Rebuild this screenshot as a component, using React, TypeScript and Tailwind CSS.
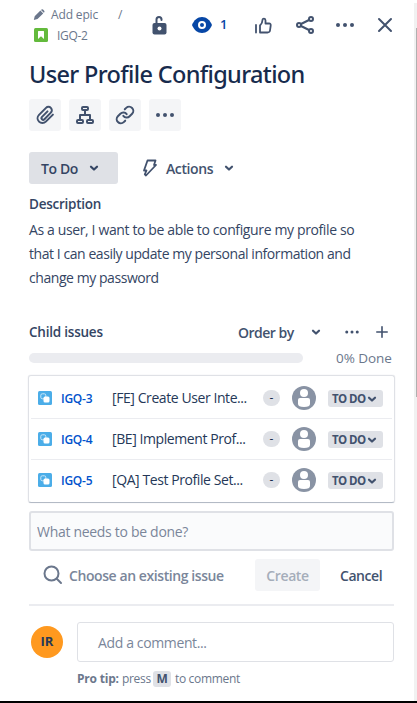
import React from "react";

const stroke = {
  fill: "none",
  stroke: "currentColor",
  strokeWidth: 2,
  strokeLinecap: "round" as const,
  strokeLinejoin: "round" as const,
};

function Chevron({ className = "" }: { className?: string }) {
  return (
    <svg viewBox="0 0 10 8" className={`h-2 w-2.5 shrink-0 ${className}`} {...stroke} strokeWidth={2.2}>
      <path d="M2 2.7 5 5.5 8 2.7" />
    </svg>
  );
}

function Dots({ className = "" }: { className?: string }) {
  return (
    <svg viewBox="0 0 24 24" className={`shrink-0 ${className}`} fill="currentColor">
      <circle cx="5" cy="12" r="2" />
      <circle cx="12" cy="12" r="2" />
      <circle cx="19" cy="12" r="2" />
    </svg>
  );
}

function Header() {
  return (
    <header className="flex h-[50px] pl-1">
      <div className="w-[115px] shrink-0 pt-[5px] text-[12px] text-[#6b778c]">
        <div className="flex h-5 items-center">
          <svg viewBox="0 0 12 12" className="h-3 w-3 shrink-0" fill="currentColor">
            <path d="M1.7 7.3 7.4 1.6 10.2 4.4 4.5 10.1 0.8 11.1ZM8 1 8.6.5Q9.3 0 10 .6L11.2 1.8Q11.8 2.5 11.3 3.2L10.8 3.8Z" />
          </svg>
          <span className="ml-1.5 w-[67px] whitespace-nowrap tracking-[-0.15px]">Add epic</span>
          <span>/</span>
        </div>
        <div className="flex h-5 items-center">
          <svg viewBox="0 0 14 14" className="ml-px h-3.5 w-3.5 shrink-0">
            <rect width="14" height="14" rx="1.5" fill="#63ba3c" />
            <path d="M4 3.5Q4 3 4.5 3H9.500Q10 3 10 3.500V11L7 8.300 4 11Z" fill="#fff" />
          </svg>
          <span className="ml-[9px] mt-px tracking-[-0.3px]">IGQ-2</span>
        </div>
      </div>
      <div className="flex h-[50px] shrink-0 items-center text-[#42526e]">
        <svg viewBox="0 0 24 24" className="-ml-px mr-px h-6 w-6 shrink-0">
          <rect x="5.500" y="10" width="14" height="11.500" rx="2" fill="currentColor" />
          <path d="M9.500 10V6.500Q9.500 4 12 4T14.500 6.500V7" {...stroke} />
          <circle cx="12.500" cy="15.500" r="2" fill="#fff" />
        </svg>
        <svg viewBox="0 0 20 16" className="ml-5 h-4 w-5 shrink-0">
          <path d="M0 8C2 3 5.500 0 10 0S18 3 20 8C18 13 14.500 16 10 16S2 13 0 8Z" fill="#0747a6" />
          <circle cx="10" cy="8" r="3" fill="none" stroke="#fff" strokeWidth="2" />
        </svg>
        <span className="ml-2 w-[24px] text-[13px] font-semibold text-[#0747a6]">1</span>
        <svg viewBox="0 0 24 24" className="ml-[7px] h-6 w-6 shrink-0" {...stroke} strokeWidth={1.8}>
          <path d="M5 12V19.500M9 19.500V12.500C11 10.500 11.500 8.500 11.500 7C11.500 5 14.500 5 14.500 7.500V10.500H18Q20 10.500 19.700 12.500L19 17.500Q18.700 19.500 16.500 19.500H9" />
        </svg>
        <svg viewBox="0 0 24 24" className="ml-[18px] h-6 w-6 shrink-0" {...stroke}>
          <path d="M8 11 16 7M8 13 16 17" />
          <circle cx="6" cy="12" r="2" />
          <circle cx="18" cy="6" r="2" />
          <circle cx="18" cy="18" r="2" />
        </svg>
        <Dots className="ml-4 h-6 w-6" />
        <svg viewBox="0 0 24 24" className="ml-4 h-6 w-6 shrink-0" {...stroke}>
          <path d="M6 6 18 18M18 6 6 18" />
        </svg>
      </div>
    </header>
  );
}

function ToolButton({ children }: { children: React.ReactNode }) {
  return (
    <button className="flex h-8 w-8 items-center justify-center rounded-[3px] bg-[#f4f5f7] text-[#42526e]">
      {children}
    </button>
  );
}

function Toolbar() {
  return (
    <div className="flex gap-2">
      <ToolButton>
        <svg viewBox="0 0 24 24" className="mr-px h-5 w-5" {...stroke} strokeWidth={2.4}>
          <path d="M21.500 11.500 13 20a5.600 5.600 0 0 1-8.200-8.200l8.400-8.400A4 4 0 0 1 19 9.200l-7.700 7.900a2 2 0 0 1-2.900-2.900l6.600-6.600" />
        </svg>
      </ToolButton>
      <ToolButton>
        <svg viewBox="0 0 24 24" className="h-6 w-6" {...stroke}>
          <rect x="9" y="4" width="6" height="3" rx="1" />
          <rect x="4" y="17" width="6" height="3" rx="1" />
          <rect x="14" y="17" width="6" height="3" rx="1" />
          <path d="M12 7V12M7 17V12H17V17" />
        </svg>
      </ToolButton>
      <ToolButton>
        <svg viewBox="0 0 24 24" className="h-5 w-5" {...stroke} strokeWidth={2.4}>
          <path d="M10 13a5 5 0 0 0 7.540.540l3-3a5 5 0 0 0-7.070-7.070l-1.720 1.710" />
          <path d="M14 11a5 5 0 0 0-7.540-.540l-3 3a5 5 0 0 0 7.070 7.070l1.710-1.710" />
        </svg>
      </ToolButton>
      <ToolButton>
        <Dots className="h-6 w-6" />
      </ToolButton>
    </div>
  );
}

const issues = [
  { id: "IGQ-3", title: "[FE] Create User Inte..." },
  { id: "IGQ-4", title: "[BE] Implement Prof..." },
  { id: "IGQ-5", title: "[QA] Test Profile Set..." },
];

function IssueRow({ id, title }: { id: string; title: string }) {
  return (
    <li className="mx-0.5 flex h-[41px] items-center border-b border-[#ebecf0] pl-[7px] last:border-b-transparent">
      <svg viewBox="0 0 14 14" className="h-3.5 w-3.5 shrink-0">
        <rect width="14" height="14" rx="1.500" fill="#4bade8" />
        <rect x="2.800" y="2.800" width="5" height="5" rx="1.500" fill="none" stroke="#c9e6f8" />
        <rect x="5.500" y="5.500" width="6" height="6" rx="1.500" fill="#fff" />
      </svg>
      <span className="ml-[9px] mt-px w-[51px] text-[12px] font-semibold tracking-[-0.25px] text-[#0052cc]">{id}</span>
      <span className="-mt-0.5 w-[151px] whitespace-nowrap text-[14px] tracking-[-0.42px] text-[#253858]">{title}</span>
      <span className="flex h-4 w-[17px] items-center justify-center rounded-full bg-[#dfe1e6] text-[12px] text-[#172b4d]">-</span>
      <svg viewBox="0 0 24 24" className="ml-3 h-6 w-6 shrink-0">
        <circle cx="12" cy="12" r="12" fill="#8993a4" />
        <circle cx="12" cy="7" r="4" fill="#fff" />
        <path d="M6 14Q6 12 8 12H16Q18 12 18 14V18Q18 21 12 21T6 18Z" fill="#fff" />
      </svg>
      <span className="ml-3 mt-px flex h-[17px] w-[55px] items-center rounded-[3px] bg-[#dfe1e6] pl-1 text-[11.5px] font-bold text-[#42526e]">
        <span className="whitespace-nowrap tracking-[-0.6px]">TO DO</span>
        <Chevron className="ml-0.5" />
      </span>
    </li>
  );
}

function ChildIssues() {
  return (
    <section>
      <div className="flex h-6 items-center text-[14px] font-semibold text-[#42526e]">
        <h3 className="w-[209px] text-[13.5px] tracking-[-0.22px] text-[#344563]">Child issues</h3>
        <span className="w-[73px] whitespace-nowrap tracking-[-0.5px]">Order by</span>
        <Chevron />
        <Dots className="ml-[22px] h-[18px] w-[18px]" />
        <svg viewBox="0 0 12 12" className="ml-[15px] h-3 w-3" {...stroke} strokeWidth={1.6}>
          <path d="M6 .8V11.200M.8 6H11.200" />
        </svg>
      </div>
      <div className="mt-1 flex h-[20px] items-center">
        <div className="h-2.5 w-[274px] rounded-full bg-[#ebecf0]" />
        <span className="ml-[33px] whitespace-nowrap text-[13.5px] tracking-[-0.07px] text-[#6b778c]">0% Done</span>
      </div>
      <ul className="-ml-px mt-[7px] h-[128px] w-[367px] rounded-[3px] border border-[#dfe1e6] border-b-[#b3bac5] pt-0.5 shadow-[0_0_1px_rgba(9,30,66,0.2)]">
        {issues.map((i) => (
          <IssueRow key={i.id} {...i} />
        ))}
      </ul>
      <input
        className="mt-2 block h-10 w-[365px] rounded-[3px] border-2 border-[#dfe1e6] bg-[#fafbfc] px-1.5 text-[14px] tracking-[-0.3px] outline-none placeholder:text-[#7a869a] placeholder:opacity-100"
        placeholder="What needs to be done?"
      />
      <div className="mt-2 flex h-8 items-center text-[14px] font-semibold">
        <svg viewBox="0 0 20 20" className="ml-3.5 h-5 w-5 shrink-0 text-[#6b778c]" {...stroke}>
          <circle cx="8.500" cy="8.500" r="7" />
          <path d="m14 14 4 4" />
        </svg>
        <span className="ml-1.5 w-[186px] whitespace-nowrap tracking-[-0.42px] text-[#7a869a]">Choose an existing issue</span>
        <button className="h-8 w-[65px] rounded-[3px] bg-[#f4f5f7] tracking-[-0.4px] text-[#a5adba]">Create</button>
        <button className="ml-5 tracking-[-0.45px] text-[#42526e]">Cancel</button>
      </div>
    </section>
  );
}

export default function App() {
  return (
    <div className="flex h-[703px] w-[417px] flex-col overflow-hidden bg-white font-['Open_Sans','Noto_Sans',sans-serif]">
      <div className="flex min-h-0 flex-1 justify-between">
        <main className="ml-[29px] w-[365px] shrink-0">
          <Header />
          <h1 className="flex h-[49px] items-center whitespace-nowrap pt-px font-['Noto_Sans','Open_Sans',sans-serif] text-[23.5px] font-medium tracking-[-0.65px] text-[#172b4d]">
            User Profile Configuration
          </h1>
          <Toolbar />
          <div className="mt-[21px] flex h-8 items-center text-[14px] font-semibold">
            <button className="flex h-8 w-[89px] items-center rounded-[3px] bg-[#dfe1e6] pl-3 text-[#344563]">
              <span className="w-12 text-left tracking-[-0.4px]">To Do</span>
              <Chevron />
            </button>
            <button className="ml-6 flex items-center text-[#42526e]">
              <svg viewBox="0 0 16 18" className="h-[18px] w-4" {...stroke} strokeWidth={1.8}>
                <path d="M5.500 1.500H13.500L12 6H14L4 16.500 2.800 15.300 4.500 11.500H2Z" />
              </svg>
              <span className="ml-2 w-[58px] text-left tracking-[-0.4px]">Actions</span>
              <Chevron />
            </button>
          </div>
          <h2 className="mt-2 flex h-6 items-center text-[13.5px] font-semibold tracking-[-0.25px] text-[#344563]">Description</h2>
          <p className="mt-[2px] whitespace-nowrap text-[14px] leading-6 tracking-[-0.37px] text-[#344563]">
            As a user, I want to be able to configure my profile so
            <br />
            <span className="tracking-[-0.44px]">that I can easily update my personal information and</span>
            <br />
            <span className="tracking-[-0.44px]">change my password</span>
          </p>
          <div className="h-[30px]" />
          <ChildIssues />
          <hr className="mt-[13px] border-t-2 border-[#ebecf0]" />
          <div className="mt-4 flex">
            <span className="ml-0.5 mt-1 flex h-8 w-8 items-center justify-center rounded-full bg-[#ff991f] text-[13px] font-bold text-[#253858]">
              IR
            </span>
            <div className="ml-3.5 w-[317px]">
              <div className="flex h-10 items-center rounded-[3px] border border-[#dfe1e6] pl-5 text-[14px] tracking-[-0.37px] text-[#7a869a]">
                Add a comment...
              </div>
              <div className="mt-[9px] flex h-4 items-center whitespace-nowrap text-[12px] tracking-[-0.33px] text-[#6b778c]">
                <b className="w-[45px] tracking-[-0.2px]">Pro tip:</b>
                <span className="w-[27px]">press</span>
                <kbd className="mx-1 flex h-4 w-[18px] items-center justify-center rounded-[3px] bg-[#dfe1e6] font-['Open_Sans'] font-bold text-[#42526e]">
                  M
                </kbd>
                <span>to comment</span>
              </div>
            </div>
          </div>
        </main>
        <div className="mt-[3px] w-[3px] bg-[#f1f1f1] pl-[2px] pt-[25px]">
          <div className="h-[369px] w-px bg-[#b0b0b0]" />
        </div>
      </div>
      <div className="h-0.5 shrink-0 bg-black" />
    </div>
  );
}
